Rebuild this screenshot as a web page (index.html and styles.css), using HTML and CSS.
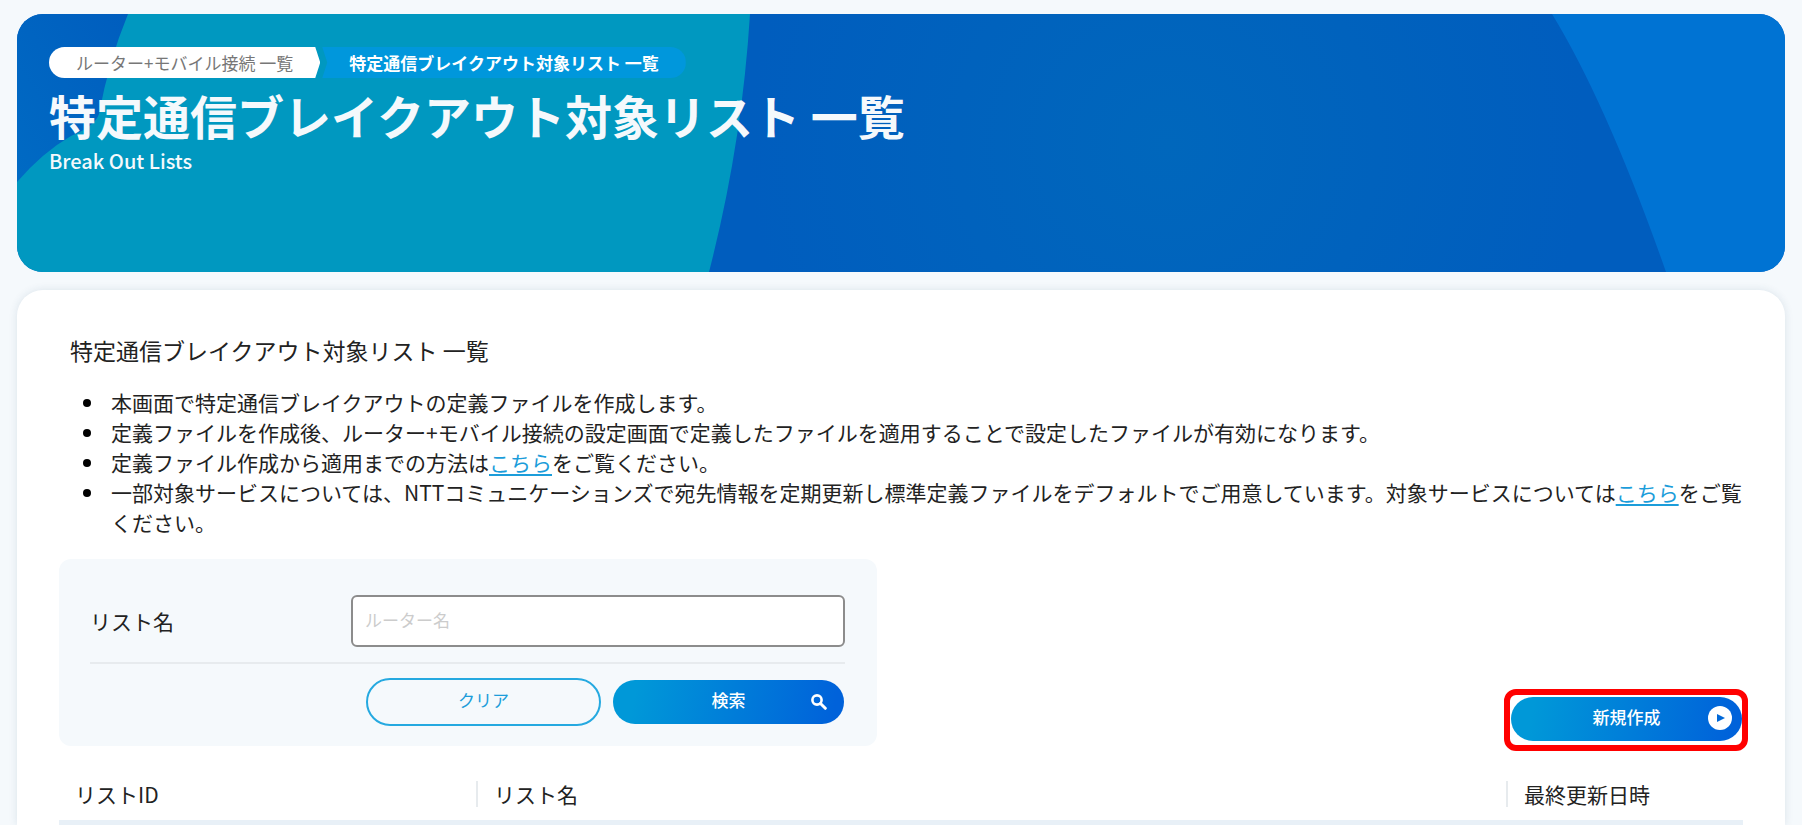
FILE: index.html
```html
<!DOCTYPE html>
<html lang="ja">
<head>
    <meta charset="UTF-8">
    <meta name="viewport" content="width=device-width, initial-scale=1.0">
    <title>特定通信ブレイクアウト対象リスト 一覧</title>
    <link rel="stylesheet" href="styles.css">
</head>
<body>
    <header class="banner">
        <svg class="banner-bg" viewBox="0 0 1768 258" preserveAspectRatio="none" aria-hidden="true">
            <defs>
                <radialGradient id="glow" gradientUnits="userSpaceOnUse" cx="1150" cy="130" r="420">
                    <stop offset="0" stop-color="#0067bc"/>
                    <stop offset="1" stop-color="#005dbe"/>
                </radialGradient>
                <linearGradient id="corner" x1="1" y1="0" x2="0" y2="1">
                    <stop offset="0" stop-color="#005dbe"/>
                    <stop offset="1" stop-color="#006bc4"/>
                </linearGradient>
            </defs>
            <rect width="1768" height="258" fill="url(#glow)"/>
            <rect width="120" height="180" fill="url(#corner)"/>
            <path d="M111 0 Q92 46 82 100 Q78 112 54 122 Q26 138 0 168 V258 H692 Q725 130 733 0 Z" fill="#0098c0"/>
            <path d="M1535 0 Q1590 90 1649 258 H1768 V0 Z" fill="#0073d3"/>
        </svg>
        <nav class="breadcrumb">
            <a class="crumb crumb-link" href="#">ルーター+モバイル接続 一覧</a>
            <span class="crumb crumb-current">特定通信ブレイクアウト対象リスト 一覧</span>
        </nav>
        <h1>特定通信ブレイクアウト対象リスト 一覧</h1>
        <p class="subtitle">Break Out Lists</p>
    </header>

    <main class="card">
        <h2>特定通信ブレイクアウト対象リスト 一覧</h2>
        <ul class="notes">
            <li>本画面で特定通信ブレイクアウトの定義ファイルを作成します。</li>
            <li>定義ファイルを作成後、ルーター+モバイル接続の設定画面で定義したファイルを適用することで設定したファイルが有効になります。</li>
            <li>定義ファイル作成から適用までの方法は<a href="#">こちら</a>をご覧ください。</li>
            <li>一部対象サービスについては、NTTコミュニケーションズで宛先情報を定期更新し標準定義ファイルをデフォルトでご用意しています。対象サービスについては<a href="#">こちら</a>をご覧ください。</li>
        </ul>

        <div class="toolbar">
            <form class="search">
                <div class="search-row">
                    <label for="listName">リスト名</label>
                    <input type="text" id="listName" placeholder="ルーター名">
                </div>
                <div class="search-actions">
                    <button type="reset" class="btn btn-outline">クリア</button>
                    <button type="submit" class="btn btn-primary">検索
                        <svg class="icon-search" viewBox="0 0 16 16" aria-hidden="true">
                            <circle cx="6" cy="6" r="4.6" fill="none" stroke="#fff" stroke-width="2.6"/>
                            <path d="M9.5 9.5 L14.3 14.3" stroke="#fff" stroke-width="3" stroke-linecap="round"/>
                        </svg>
                    </button>
                </div>
            </form>
            <div class="highlight">
                <button type="button" class="btn btn-primary">新規作成
                    <svg class="icon-play" viewBox="0 0 24 24" aria-hidden="true">
                        <circle cx="12" cy="12" r="12" fill="#fff"/>
                        <path d="M9 8 L17 12 L9 16 Z" fill="#0068d8"/>
                    </svg>
                </button>
            </div>
        </div>

        <table class="lists">
            <thead>
                <tr>
                    <th class="col-id"><span>リストID</span></th>
                    <th class="col-name"><span>リスト名</span></th>
                    <th class="col-date"><span>最終更新日時</span></th>
                </tr>
            </thead>
        </table>
    </main>
</body>
</html>
```

FILE: styles.css
```css
* {
    box-sizing: border-box;
}

body {
    margin: 0;
    padding: 14px 17px 0;
    background: #f5f9fc;
    color: #222;
    font-family: "Noto Sans CJK JP", sans-serif;
    font-size: 21px;
    line-height: 30px;
}

.banner {
    position: relative;
    overflow: hidden;
    min-height: 258px;
    padding: 33px 32px;
    border-radius: 26px;
    color: #f5f9fc;
}

.banner-bg {
    position: absolute;
    inset: 0;
    width: 100%;
    height: 100%;
    z-index: -1;
}

.breadcrumb {
    display: flex;
    gap: 2px;
    font-size: 17px;
    line-height: 31px;
}

.crumb {
    padding: 0 27px;
}

.crumb-link {
    background: #fff;
    color: #777;
    text-decoration: none;
    border-radius: 16px 0 0 16px;
    clip-path: polygon(0 0, calc(100% - 5px) 0, 100% 50%, calc(100% - 5px) 100%, 0 100%);
}

.crumb-current {
    background: #0097dc;
    color: #fff;
    font-weight: 700;
    border-radius: 0 16px 16px 0;
    clip-path: polygon(0 0, 100% 0, 100% 100%, 0 100%, 5px 50%);
}

h1 {
    margin: 6px 0 0;
    font-size: 47px;
    line-height: 62px;
    font-weight: 700;
}

.subtitle {
    margin: 0;
    font-size: 20px;
    line-height: 30px;
    font-weight: 500;
}

.card {
    margin-top: 18px;
    padding: 42px 37px 0 42px;
    background: #fff;
    border-radius: 26px 26px 0 0;
    box-shadow: 0 0 8px rgba(30, 70, 110, 0.12);
}

h2 {
    margin: 0 0 19px;
    padding-left: 11px;
    font-size: 23px;
    line-height: 36px;
    font-weight: 400;
}

.notes {
    margin: 0;
    padding-left: 47px;
}

.notes li {
    padding-left: 5px;
}

.notes li::marker {
    color: #000;
}

.notes a {
    color: #1c9dda;
    text-underline-offset: 3px;
}

.toolbar {
    display: flex;
    justify-content: space-between;
    align-items: flex-end;
    margin-top: 22px;
}

.search {
    width: 818px;
    padding: 36px 32px 20px 31px;
    background: #f5f9fc;
    border-radius: 12px;
}

.search-row {
    display: flex;
    justify-content: space-between;
    align-items: center;
    padding-bottom: 15px;
    border-bottom: 2px solid #e7ebee;
}

.search-row input {
    width: 494px;
    height: 52px;
    padding: 0 12px 3px;
    border: 2px solid #8c8c8c;
    border-radius: 6px;
    background: #fff;
    font-family: inherit;
    font-size: 17px;
}

.search-row input::placeholder {
    color: #ccc;
}

.search-actions {
    display: flex;
    justify-content: flex-end;
    align-items: center;
    gap: 12px;
    padding: 14px 1px 0 0;
}

.btn {
    position: relative;
    width: 231px;
    height: 44px;
    padding: 0 0 5px;
    border: none;
    border-radius: 24px;
    font-family: inherit;
    font-size: 17px;
    cursor: pointer;
}

.btn-outline {
    width: 235px;
    height: 48px;
    border: 2px solid #25a9e0;
    background: transparent;
    color: #1c9dda;
}

.btn-primary {
    background: linear-gradient(100deg, #0098d8 10%, #0062da 95%);
    color: #fff;
    font-weight: 500;
}

.icon-search {
    position: absolute;
    top: 14px;
    right: 17px;
    width: 16px;
    height: 16px;
}

.icon-play {
    position: absolute;
    top: 9px;
    right: 10px;
    width: 24px;
    height: 24px;
}

.highlight {
    display: flex;
    margin-bottom: -5px;
    padding: 2px 0 4px 1px;
    border: 6px solid #f00;
    border-radius: 12px;
}

.lists {
    width: calc(100% - 5px);
    margin-top: 23px;
    border-collapse: collapse;
    border-bottom: 5px solid #e8f0f7;
}

.lists th {
    padding: 12px 0 13px;
    text-align: left;
    font-weight: 400;
    line-height: 26px;
}

.lists th span {
    display: block;
    padding-left: 16px;
}

.lists th + th span {
    border-left: 2px solid #e7ebee;
}

.col-id {
    width: 417px;
}

.col-date {
    width: 237px;
}
```
